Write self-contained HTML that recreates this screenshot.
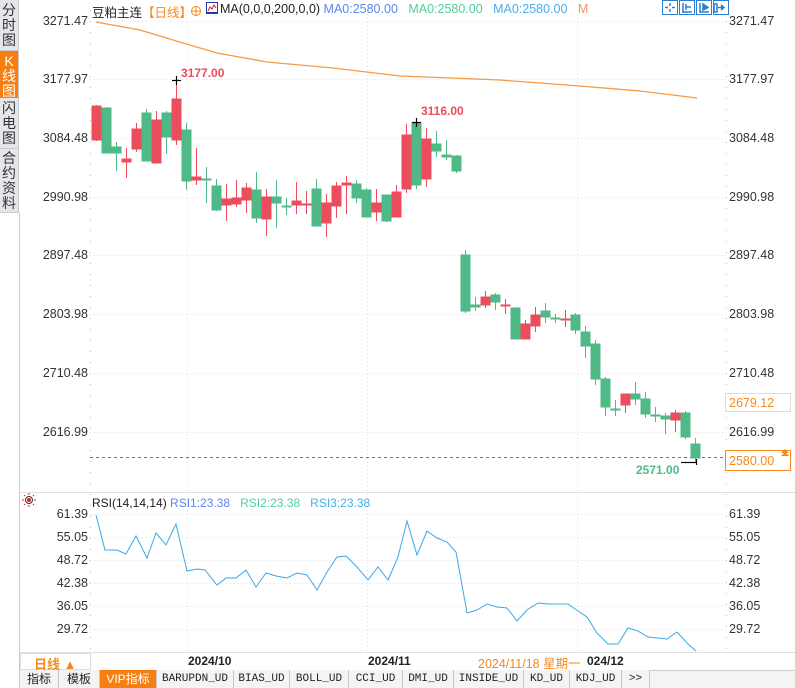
<!DOCTYPE html>
<html><head><meta charset="utf-8"><style>
*{margin:0;padding:0;box-sizing:border-box}
body{width:795px;height:688px;overflow:hidden;background:#fff;font-family:"Liberation Sans","Noto Sans CJK SC",sans-serif;font-size:12px;color:#222;position:relative}
.a{position:absolute;white-space:nowrap}
.side{position:absolute;left:0;width:19px;background:#e4e6ea;border-right:1px solid #c8ccd2;border-bottom:1px solid #c8ccd2;font-size:14px;line-height:15px;text-align:center;color:#333;padding-top:3px;overflow:hidden}
.tab{position:absolute;top:670px;height:18px;border-right:1px solid #c8c8c8;font-family:"Liberation Mono","Noto Sans CJK SC",monospace;font-size:11px;line-height:18px;text-align:center;color:#222;background:#f4f4f4}
.yl{position:absolute;left:30px;width:58px;text-align:right;font-size:12.5px;color:#333}
.yr{position:absolute;left:729px;font-size:12.5px;color:#333}
.btn{position:absolute;top:0;width:16px;height:15px;border:1.5px solid #2a7fcf;background:#fff}
</style></head><body>
<div class="side" style="top:0;height:51px">分<br>时<br>图</div>
<div class="side" style="top:51px;height:47px;background:#f77f10;color:#fff;border-bottom-color:#f77f10">K<br>线<br>图</div>
<div class="side" style="top:98px;height:51px">闪<br>电<br>图</div>
<div class="side" style="top:149px;height:64px;padding-top:2px">合<br>约<br>资<br>料</div>
<div style="position:absolute;left:19px;top:213px;width:1px;height:475px;background:#c8ccd2"></div>

<svg class="a" style="left:0;top:0" width="795" height="688">
<g stroke="#ddd" stroke-dasharray="1 3" stroke-width="1">
<line x1="90" y1="21.5" x2="726" y2="21.5"/><line x1="90" y1="79.5" x2="726" y2="79.5"/><line x1="90" y1="138.5" x2="726" y2="138.5"/><line x1="90" y1="197.5" x2="726" y2="197.5"/><line x1="90" y1="255.5" x2="726" y2="255.5"/><line x1="90" y1="314.5" x2="726" y2="314.5"/><line x1="90" y1="373.5" x2="726" y2="373.5"/><line x1="90" y1="432.5" x2="726" y2="432.5"/>
<line x1="187.5" y1="10" x2="187.5" y2="652"/><line x1="367.5" y1="10" x2="367.5" y2="652"/><line x1="577.5" y1="10" x2="577.5" y2="652"/>
<line x1="90" y1="514.5" x2="726" y2="514.5"/><line x1="90" y1="537.5" x2="726" y2="537.5"/><line x1="90" y1="560.5" x2="726" y2="560.5"/><line x1="90" y1="583.5" x2="726" y2="583.5"/><line x1="90" y1="606.5" x2="726" y2="606.5"/><line x1="90" y1="629.5" x2="726" y2="629.5"/>
</g>
<g stroke="#bbb" stroke-dasharray="1 10"><line x1="90.5" y1="10" x2="90.5" y2="652"/><line x1="726.5" y1="10" x2="726.5" y2="652"/></g>
<line x1="20" y1="492.5" x2="795" y2="492.5" stroke="#e2e2e2"/>
<line x1="20" y1="652.5" x2="795" y2="652.5" stroke="#e2e2e2"/>
<line x1="90" y1="457.5" x2="726" y2="457.5" stroke="#2a7fd8" stroke-dasharray="3 3"/>
<polyline fill="none" stroke="#f59a45" stroke-width="1.3" points="96,22 140,30 183,43 217,53 267,62 333,68 400,76 500,80 580,86 640,91 697,98"/>
<g stroke="#eb4d5c" fill="#eb4d5c">
<line x1="96.5" y1="105" x2="96.5" y2="141"/><rect x="92" y="106" width="9" height="34"/>
<line x1="126.5" y1="148" x2="126.5" y2="178"/><rect x="122" y="159" width="9" height="3"/>
<line x1="136.5" y1="123" x2="136.5" y2="152"/><rect x="132" y="129" width="9" height="20"/>
<line x1="156.5" y1="111" x2="156.5" y2="163"/><rect x="152" y="120" width="9" height="43"/>
<line x1="176.5" y1="80" x2="176.5" y2="145"/><rect x="172" y="99" width="9" height="41"/>
<line x1="196.5" y1="148" x2="196.5" y2="185"/><rect x="192" y="177" width="9" height="3"/>
<line x1="226.5" y1="184" x2="226.5" y2="221"/><rect x="222" y="199" width="9" height="6"/>
<line x1="236.5" y1="180" x2="236.5" y2="207"/><rect x="232" y="198" width="9" height="6"/>
<line x1="246.5" y1="183" x2="246.5" y2="213"/><rect x="242" y="188" width="9" height="12"/>
<line x1="266.5" y1="189" x2="266.5" y2="236"/><rect x="262" y="197" width="9" height="22"/>
<line x1="296.5" y1="182" x2="296.5" y2="214"/><rect x="292" y="201" width="9" height="4"/>
<line x1="306.5" y1="191" x2="306.5" y2="214"/><rect x="302" y="204" width="9" height="1"/>
<line x1="326.5" y1="194" x2="326.5" y2="237"/><rect x="322" y="203" width="9" height="20"/>
<line x1="336.5" y1="182" x2="336.5" y2="218"/><rect x="332" y="186" width="9" height="20"/>
<line x1="346.5" y1="176" x2="346.5" y2="214"/><rect x="342" y="183" width="9" height="2"/>
<line x1="376.5" y1="189" x2="376.5" y2="221"/><rect x="372" y="203" width="9" height="9"/>
<line x1="396.5" y1="185" x2="396.5" y2="217"/><rect x="392" y="192" width="9" height="25"/>
<line x1="406.5" y1="124" x2="406.5" y2="193"/><rect x="402" y="135" width="9" height="54"/>
<line x1="426.5" y1="128" x2="426.5" y2="187"/><rect x="422" y="139" width="9" height="40"/>
<line x1="485.5" y1="291" x2="485.5" y2="308"/><rect x="481" y="297" width="9" height="8"/>
<line x1="505.5" y1="299" x2="505.5" y2="314"/><rect x="501" y="305" width="9" height="1"/>
<line x1="525.5" y1="320" x2="525.5" y2="339"/><rect x="521" y="324" width="9" height="15"/>
<line x1="535.5" y1="307" x2="535.5" y2="332"/><rect x="531" y="315" width="9" height="11"/>
<line x1="565.5" y1="310" x2="565.5" y2="327"/><rect x="561" y="319" width="9" height="1"/>
<line x1="625.5" y1="394" x2="625.5" y2="413"/><rect x="621" y="394" width="9" height="11"/>
<line x1="675.5" y1="410" x2="675.5" y2="432"/><rect x="671" y="413" width="9" height="7"/>
</g>
<g stroke="#4fba88" fill="#4fba88">
<line x1="106.5" y1="107" x2="106.5" y2="153"/><rect x="102" y="108" width="9" height="45"/>
<line x1="116.5" y1="142" x2="116.5" y2="171"/><rect x="112" y="147" width="9" height="6"/>
<line x1="146.5" y1="109" x2="146.5" y2="161"/><rect x="142" y="113" width="9" height="48"/>
<line x1="166.5" y1="111" x2="166.5" y2="154"/><rect x="162" y="113" width="9" height="24"/>
<line x1="186.5" y1="123" x2="186.5" y2="190"/><rect x="182" y="130" width="9" height="51"/>
<line x1="206.5" y1="167" x2="206.5" y2="203"/><rect x="202" y="179" width="9" height="1"/>
<line x1="216.5" y1="179" x2="216.5" y2="211"/><rect x="212" y="186" width="9" height="24"/>
<line x1="256.5" y1="172" x2="256.5" y2="223"/><rect x="252" y="190" width="9" height="28"/>
<line x1="276.5" y1="180" x2="276.5" y2="228"/><rect x="272" y="197" width="9" height="6"/>
<line x1="286.5" y1="198" x2="286.5" y2="215"/><rect x="282" y="206" width="9" height="1"/>
<line x1="316.5" y1="179" x2="316.5" y2="226"/><rect x="312" y="189" width="9" height="37"/>
<line x1="356.5" y1="180" x2="356.5" y2="203"/><rect x="352" y="184" width="9" height="14"/>
<line x1="366.5" y1="188" x2="366.5" y2="217"/><rect x="362" y="190" width="9" height="27"/>
<line x1="386.5" y1="195" x2="386.5" y2="222"/><rect x="382" y="195" width="9" height="26"/>
<line x1="416.5" y1="122" x2="416.5" y2="189"/><rect x="412" y="123" width="9" height="62"/>
<line x1="436.5" y1="131" x2="436.5" y2="157"/><rect x="432" y="144" width="9" height="7"/>
<line x1="446.5" y1="140" x2="446.5" y2="160"/><rect x="442" y="155" width="9" height="2"/>
<line x1="456.5" y1="155" x2="456.5" y2="173"/><rect x="452" y="156" width="9" height="15"/>
<line x1="465.5" y1="250" x2="465.5" y2="313"/><rect x="461" y="255" width="9" height="56"/>
<line x1="475.5" y1="297" x2="475.5" y2="311"/><rect x="471" y="305" width="9" height="2"/>
<line x1="495.5" y1="293" x2="495.5" y2="310"/><rect x="491" y="295" width="9" height="7"/>
<line x1="515.5" y1="308" x2="515.5" y2="339"/><rect x="511" y="308" width="9" height="31"/>
<line x1="545.5" y1="303" x2="545.5" y2="323"/><rect x="541" y="311" width="9" height="6"/>
<line x1="555.5" y1="314" x2="555.5" y2="323"/><rect x="551" y="318" width="9" height="1"/>
<line x1="575.5" y1="313" x2="575.5" y2="334"/><rect x="571" y="315" width="9" height="15"/>
<line x1="585.5" y1="326" x2="585.5" y2="358"/><rect x="581" y="332" width="9" height="14"/>
<line x1="595.5" y1="340" x2="595.5" y2="385"/><rect x="591" y="344" width="9" height="35"/>
<line x1="605.5" y1="377" x2="605.5" y2="416"/><rect x="601" y="379" width="9" height="28"/>
<line x1="615.5" y1="400" x2="615.5" y2="416"/><rect x="611" y="409" width="9" height="1"/>
<line x1="635.5" y1="382" x2="635.5" y2="405"/><rect x="631" y="394" width="9" height="5"/>
<line x1="645.5" y1="392" x2="645.5" y2="418"/><rect x="641" y="399" width="9" height="15"/>
<line x1="655.5" y1="407" x2="655.5" y2="422"/><rect x="651" y="415" width="9" height="1"/>
<line x1="665.5" y1="413" x2="665.5" y2="434"/><rect x="661" y="416" width="9" height="3"/>
<line x1="685.5" y1="411" x2="685.5" y2="439"/><rect x="681" y="413" width="9" height="24"/>
<line x1="695.5" y1="438" x2="695.5" y2="462"/><rect x="691" y="444" width="9" height="14"/>
</g>
<g stroke="#000" stroke-width="1.2"><line x1="172" y1="80.5" x2="181" y2="80.5"/><line x1="176.5" y1="76" x2="176.5" y2="85"/><line x1="412" y1="122.5" x2="421" y2="122.5"/><line x1="416.5" y1="118" x2="416.5" y2="127"/><line x1="681" y1="462.5" x2="697" y2="462.5"/><line x1="696.5" y1="459" x2="696.5" y2="465"/></g>
<polyline fill="none" stroke="#3aa8e8" stroke-width="1" points="96,515 105,550 117,550 126,554 136,536 147,558 156,533 166,545 176,524 187,571 197,569 205,570 217,585 226,578 236,578 246,570 256,587 266,573 276,576 287,578 297,573 307,575 317,590 327,572 337,557 346,556 357,567 368,580 378,567 388,580 398,557 407,521 417,555 427,531 437,538 447,542 456,552 467,613 477,610 487,604 497,607 507,608 517,621 527,610 538,603 548,604 558,604 568,604 578,611 587,617 597,633 608,644 618,644 628,628 638,631 648,637 658,638 667,639 677,632 687,643 696,651"/>
<rect x="725.5" y="393.5" width="65" height="18" fill="#fff" stroke="#ddd"/>
<rect x="725.5" y="450.5" width="65" height="20" fill="#fff" stroke="#f58a1a"/>
<path d="M785 449 L789 453 L781 453Z M785 452 L789 456 L781 456Z" fill="#f58a1a"/>
<g transform="translate(29,500)"><circle r="3.5" fill="none" stroke="#333"/><circle r="2" fill="#e02020"/><g stroke="#e02020" stroke-width="1"><line x1="0" y1="-7" x2="0" y2="-5"/><line x1="0" y1="5" x2="0" y2="7"/><line x1="-7" y1="0" x2="-5" y2="0"/><line x1="5" y1="0" x2="7" y2="0"/><line x1="-5" y1="-5" x2="-4" y2="-4"/><line x1="5" y1="5" x2="4" y2="4"/><line x1="-5" y1="5" x2="-4" y2="4"/><line x1="5" y1="-5" x2="4" y2="-4"/></g></g>
<rect x="20.5" y="653.5" width="70" height="16" fill="#fff" stroke="#ddd"/>
<rect x="20" y="670" width="775" height="18" fill="#f4f4f4"/>
<line x1="20" y1="670.5" x2="795" y2="670.5" stroke="#ccc"/>
<g transform="translate(206,2)"><rect x="0.5" y="0.5" width="11" height="11" fill="#fff" stroke="#1a3fa0"/><polyline points="2,9 4,5 6,7 8,3 10,6" fill="none" stroke="#e02020"/><line x1="1" y1="10.5" x2="11" y2="10.5" stroke="#1a3fa0"/></g>
<g fill="none" stroke="#f58a1a"><circle cx="196" cy="11" r="4.5"/><line x1="191" y1="11" x2="201" y2="11"/><line x1="196" y1="6" x2="196" y2="16"/></g>
</svg>

<div class="a" style="left:92px;top:2px;font-size:12.5px">豆粕主连<span style="color:#f58a1a">【日线】</span></div>
<div class="a" style="left:220px;top:2px;font-size:12.5px">MA(0,0,0,200,0,0) <span style="color:#5b86f0">MA0:2580.00</span>&nbsp;&nbsp; <span style="color:#4fd09a">MA0:2580.00</span>&nbsp;&nbsp; <span style="color:#4aaee8">MA0:2580.00</span>&nbsp;&nbsp; <span style="color:#f7945a">M</span></div>
<div class="btn" style="left:662px"></div><div class="btn" style="left:679px"></div><div class="btn" style="left:696px"></div><div class="btn" style="left:713px"></div>
<svg class="a" style="left:662px;top:0" width="70" height="16"><g stroke="#2a7fcf" fill="#2a7fcf" stroke-width="1.5"><line x1="8" y1="3" x2="8" y2="6"/><line x1="8" y1="9" x2="8" y2="12"/><line x1="3" y1="7.5" x2="6" y2="7.5"/><line x1="10" y1="7.5" x2="13" y2="7.5"/><line x1="21" y1="3" x2="21" y2="13"/><line x1="21" y1="12" x2="30" y2="12"/><line x1="24" y1="4" x2="24" y2="10"/><line x1="24" y1="7" x2="29" y2="7"/><line x1="38" y1="3" x2="38" y2="13"/><line x1="38" y1="12" x2="47" y2="12"/><path d="M41 4 L46 7.5 L41 10Z"/><rect x="52" y="4" width="3" height="8" fill="none"/><path d="M56 7.5 L62 7.5 M59 5 L62 7.5 L59 10"/></g></svg>

<div class="a" style="left:181px;top:66px;color:#eb4d5c;font-weight:bold;font-size:12px">3177.00</div>
<div class="a" style="left:421px;top:104px;color:#eb4d5c;font-weight:bold;font-size:12px">3116.00</div>
<div class="a" style="left:636px;top:463px;color:#4fba88;font-weight:bold;font-size:12px">2571.00</div>

<div class="yl" style="top:14px">3271.47</div><div class="yl" style="top:72px">3177.97</div><div class="yl" style="top:131px">3084.48</div><div class="yl" style="top:190px">2990.98</div><div class="yl" style="top:248px">2897.48</div><div class="yl" style="top:307px">2803.98</div><div class="yl" style="top:366px">2710.48</div><div class="yl" style="top:425px">2616.99</div>
<div class="yr" style="top:14px">3271.47</div><div class="yr" style="top:72px">3177.97</div><div class="yr" style="top:131px">3084.48</div><div class="yr" style="top:190px">2990.98</div><div class="yr" style="top:248px">2897.48</div><div class="yr" style="top:307px">2803.98</div><div class="yr" style="top:366px">2710.48</div><div class="yr" style="top:425px">2616.99</div>
<div class="yr" style="top:396px;color:#f58a1a">2679.12</div>
<div class="yr" style="top:454px;color:#f58a1a">2580.00</div>

<div class="a" style="left:92px;top:496px;font-size:12px">RSI(14,14,14) <span style="color:#5b86f0">RSI1:23.38</span>&nbsp;&nbsp; <span style="color:#4fd09a">RSI2:23.38</span>&nbsp;&nbsp; <span style="color:#4aaee8">RSI3:23.38</span></div>
<div class="yl" style="top:507px">61.39</div><div class="yl" style="top:530px">55.05</div><div class="yl" style="top:553px">48.72</div><div class="yl" style="top:576px">42.38</div><div class="yl" style="top:599px">36.05</div><div class="yl" style="top:622px">29.72</div>
<div class="yr" style="top:507px">61.39</div><div class="yr" style="top:530px">55.05</div><div class="yr" style="top:553px">48.72</div><div class="yr" style="top:576px">42.38</div><div class="yr" style="top:599px">36.05</div><div class="yr" style="top:622px">29.72</div>

<div class="a" style="left:34px;top:654px;color:#f58a1a;font-weight:bold;font-size:13px">日线 ▲</div>
<div class="a" style="left:188px;top:654px;font-weight:bold;font-size:12px">2024/10</div>
<div class="a" style="left:368px;top:654px;font-weight:bold;font-size:12px">2024/11</div>
<div class="a" style="left:478px;top:653px;color:#f58a1a;font-size:12.5px;background:#fff;padding-right:2px">2024/11/18 星期一</div>
<div class="a" style="left:587px;top:654px;font-weight:bold;font-size:12px">024/12</div>

<div class="tab" style="left:20px;width:39px;font-family:'Liberation Sans','Noto Sans CJK SC',sans-serif;font-size:12px">指标</div>
<div class="tab" style="left:59px;width:41px;font-family:'Liberation Sans','Noto Sans CJK SC',sans-serif;font-size:12px">模板</div>
<div class="tab" style="left:100px;width:57px;background:#f77f10;color:#fff;font-family:'Liberation Sans','Noto Sans CJK SC',sans-serif;font-size:12px">VIP指标</div>
<div class="tab" style="left:157px;width:77px">BARUPDN_UD</div>
<div class="tab" style="left:234px;width:56px">BIAS_UD</div>
<div class="tab" style="left:290px;width:59px">BOLL_UD</div>
<div class="tab" style="left:349px;width:54px">CCI_UD</div>
<div class="tab" style="left:403px;width:51px">DMI_UD</div>
<div class="tab" style="left:454px;width:70px">INSIDE_UD</div>
<div class="tab" style="left:524px;width:46px">KD_UD</div>
<div class="tab" style="left:570px;width:52px">KDJ_UD</div>
<div class="tab" style="left:622px;width:28px">&gt;&gt;</div>
</body></html>
